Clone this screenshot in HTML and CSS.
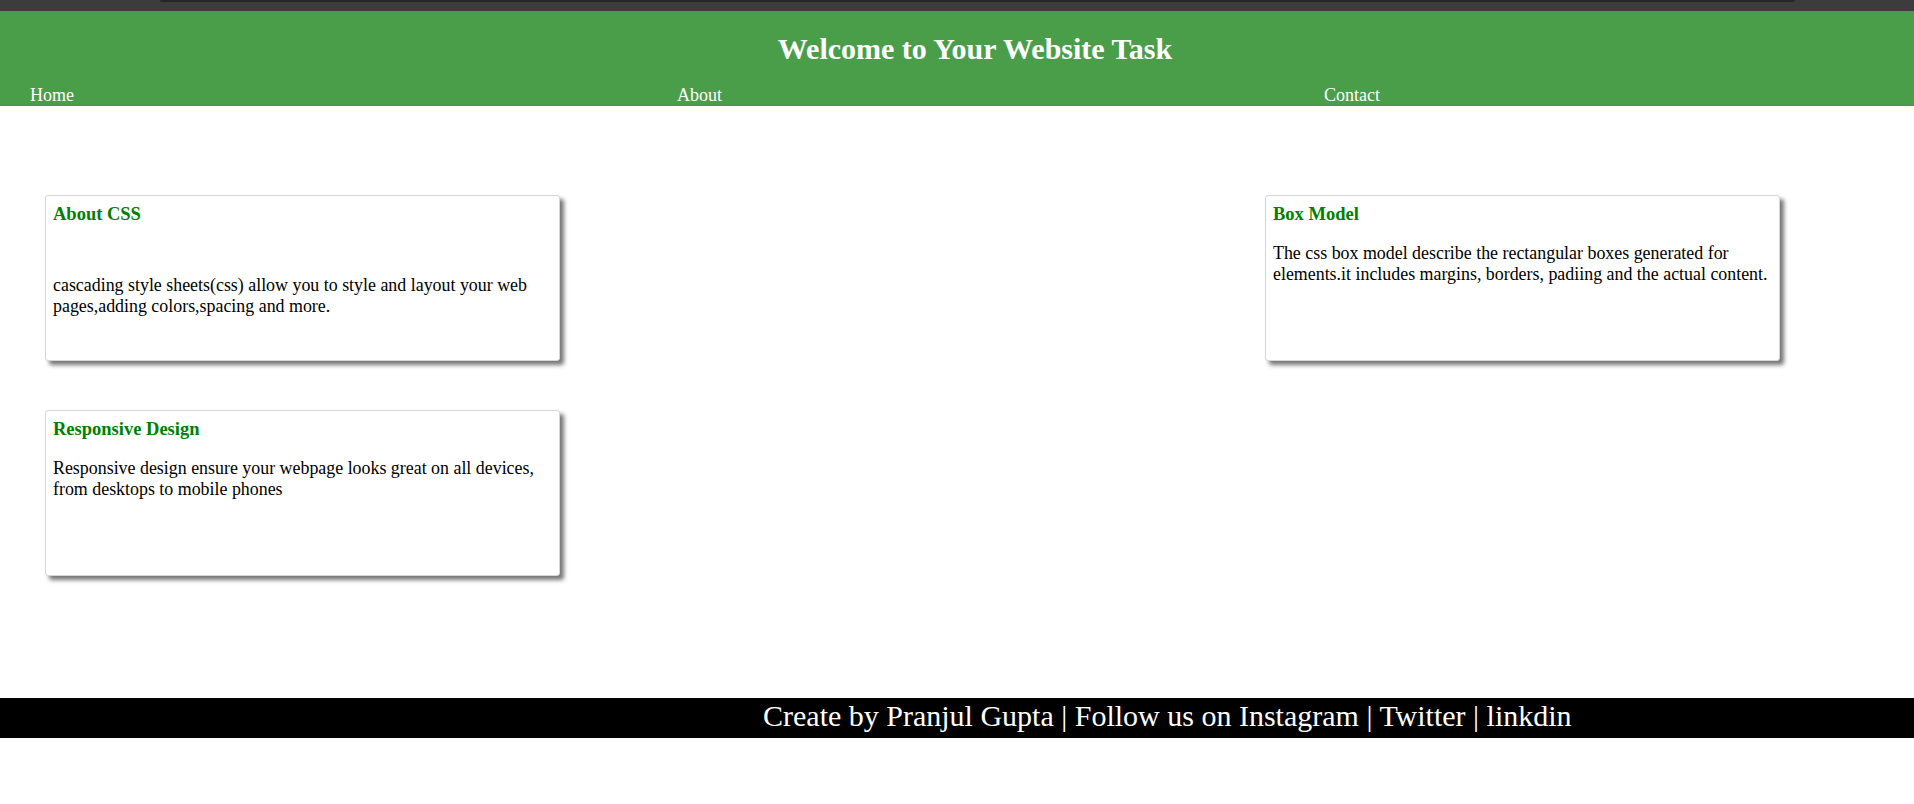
FILE: index.html
```html
<!DOCTYPE html>
<html lang="en">
<head>
<meta charset="utf-8">
<title>Welcome to Your Website Task</title>
<link rel="stylesheet" href="styles.css">
</head>
<body>
<div class="topbar"><div class="topbar-strip"></div></div>
<header class="site-header">
  <h1 class="site-title">Welcome to Your Website Task</h1>
  <nav class="site-nav">
    <a class="nav-link" href="#">Home</a>
    <a class="nav-link" href="#">About</a>
    <a class="nav-link" href="#">Contact</a>
  </nav>
</header>
<main class="content">
  <section class="card card-a">
    <h3 class="card-title">About CSS</h3>
    <p class="card-text card-text-low">cascading style sheets(css) allow you to style and layout your web pages,adding colors,spacing and more.</p>
  </section>
  <section class="card card-c">
    <h3 class="card-title">Box Model</h3>
    <p class="card-text">The css box model describe the rectangular boxes generated for elements.it includes margins, borders, padiing and the actual content.</p>
  </section>
  <section class="card card-b">
    <h3 class="card-title">Responsive Design</h3>
    <p class="card-text">Responsive design ensure your webpage looks great on all devices, from desktops to mobile phones</p>
  </section>
</main>
<footer class="site-footer">
  <p class="footer-text">Create by Pranjul Gupta | Follow us on Instagram | Twitter | linkdin</p>
</footer>
</body>
</html>
```
FILE: styles.css
```css
* { box-sizing: border-box; }

html, body {
  margin: 0;
  padding: 0;
  background: #ffffff;
  font-family: "Liberation Serif", "Times New Roman", serif;
  color: #000;
}

.topbar {
  height: 11px;
  background: #3c3c3c;
  padding: 0 119px 0 160px;
}
.topbar-strip {
  height: 2px;
  background: #262626;
  border-radius: 0 0 6px 6px;
}

.site-header {
  background: #4a9e4a;
  color: #ffffff;
  padding: 21px 0 0 0;
}

.site-title {
  margin: 0;
  padding-left: 36px;
  text-align: center;
  font-size: 30px;
  line-height: 33px;
  font-weight: bold;
}

.site-nav {
  margin-top: 20px;
  padding-left: 30px;
  display: grid;
  grid-template-columns: repeat(3, 647px);
  line-height: 21px;
}

.nav-link {
  color: #ffffff;
  text-decoration: none;
  font-size: 18px;
}

.content {
  padding: 89px 0 122px 45px;
  display: grid;
  grid-template-columns: repeat(3, 515px);
  column-gap: 95px;
  row-gap: 49px;
}

.card {
  height: 166px;
  padding: 8px 2px 7px 7px;
  background: #fff;
  border: 1px solid #d6d6d6;
  border-radius: 3px;
  box-shadow: 4px 4px 4px #777777;
}

.card-a { grid-column: 1; grid-row: 1; }
.card-c { grid-column: 3; grid-row: 1; }
.card-b { grid-column: 1; grid-row: 2; }

.card-title {
  margin: 0 0 18px 0;
  color: #008000;
  font-size: 18.5px;
  line-height: 21px;
  font-weight: bold;
}

.card-text {
  margin: 0;
  font-size: 17.9px;
  line-height: 21px;
}

.card-text-low {
  margin-top: 50px;
}

.site-footer {
  background: #000;
  color: #fff;
  height: 40px;
}

.footer-text {
  margin: 0;
  padding-left: 763px;
  font-size: 30px;
  line-height: 36px;
  white-space: nowrap;
}
```
